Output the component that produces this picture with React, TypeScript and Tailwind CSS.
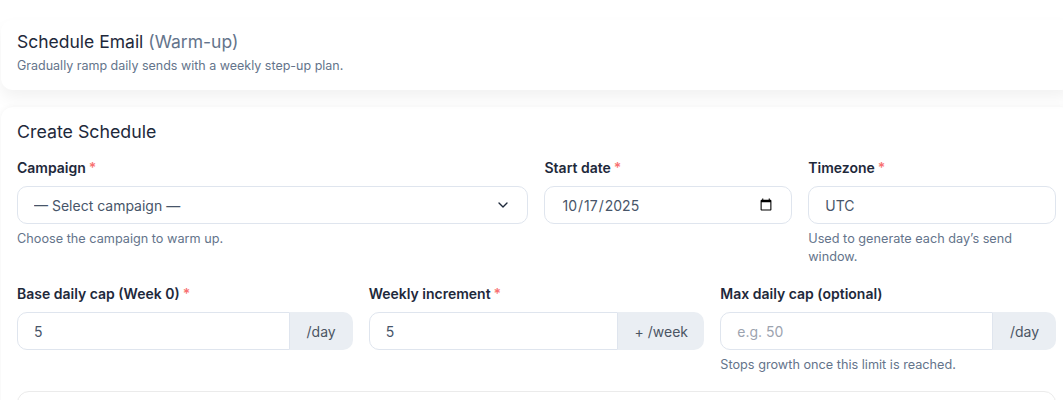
import { ChevronDown } from "lucide-react";

function Label({ text, required }: { text: string; required?: boolean }) {
  return (
    <label className="block text-[14px] leading-5 font-semibold text-[#1e293b] mb-2">
      {text}
      {required && <span className="text-[#f87171] ml-[3px]">*</span>}
    </label>
  );
}

function AddonInput({ value, placeholder, addon, addonW }: { value?: string; placeholder?: string; addon: string; addonW: string }) {
  return (
    <div className="flex h-[38px]">
      <input
        defaultValue={value}
        placeholder={placeholder}
        className="flex-1 min-w-0 rounded-l-[10px] border border-[#dfe5ee] bg-white px-4 text-[14px] text-[#475569] placeholder:text-[#9ca3af] outline-none"
      />
      <span className={`${addonW} flex items-center justify-center rounded-r-[10px] bg-[#eaeef3] text-[14px] text-[#4b5563]`}>{addon}</span>
    </div>
  );
}

export default function App() {
  return (
    <div className="w-[1063px] h-[400px] overflow-hidden bg-white font-['Inter',sans-serif] text-[#1e293b]">
      <div className="w-[1072px] pt-5 pl-[1px]">
        <div className="relative z-10 rounded-xl bg-white px-4 pt-[11px] pb-4 shadow-[0_8px_16px_rgba(0,0,0,0.055)]">
          <h1 className="text-[17.5px] leading-[22px] text-[#1e293b]">
            Schedule Email <span className="text-[#64748b]">(Warm-up)</span>
          </h1>
          <p className="mt-[5px] text-[12.5px] leading-4 text-[#64748b]">Gradually ramp daily sends with a weekly step-up plan.</p>
        </div>

        <div className="mt-[17px] rounded-xl bg-white px-4 pt-[14px] shadow-[0_0_6px_rgba(0,0,0,0.05)]">
          <h2 className="text-[17.8px] leading-[22px] text-[#1e293b] mb-[15px]">Create Schedule</h2>

          <div className="grid grid-cols-12 gap-x-4 gap-y-[18px]">
            <div className="col-span-6">
              <Label text="Campaign" required />
              <div className="relative h-[38px]">
                <select className="h-full w-full appearance-none rounded-[10px] border border-[#dfe5ee] bg-white px-4 text-[14px] text-[#475569] outline-none">
                  <option>— Select campaign —</option>
                </select>
                <ChevronDown className="pointer-events-none absolute right-[17px] top-[11px] h-4 w-4 text-[#1e293b]" strokeWidth={2} />
              </div>
              <p className="mt-[6px] text-[12.7px] leading-[18px] text-[#64748b]">Choose the campaign to warm up.</p>
            </div>

            <div className="col-span-3">
              <Label text="Start date" required />
              <input
                type="date"
                defaultValue="2025-10-17"
                className="h-[38px] w-full rounded-[10px] border border-[#dfe5ee] bg-white px-4 text-[14px] text-[#475569] outline-none"
              />
            </div>

            <div className="col-span-3">
              <Label text="Timezone" required />
              <input
                defaultValue="UTC"
                className="h-[38px] w-full rounded-[10px] border border-[#dfe5ee] bg-white px-4 text-[14px] text-[#475569] outline-none"
              />
              <p className="mt-[6px] w-[225px] text-[12.7px] leading-[18px] text-[#64748b]">Used to generate each day’s send window.</p>
            </div>

            <div className="col-span-4">
              <Label text="Base daily cap (Week 0)" required />
              <AddonInput value="5" addon="/day" addonW="w-[63px]" />
            </div>

            <div className="col-span-4">
              <Label text="Weekly increment" required />
              <AddonInput value="5" addon="+ /week" addonW="w-[86px]" />
            </div>

            <div className="col-span-4">
              <Label text="Max daily cap (optional)" />
              <AddonInput placeholder="e.g. 50" addon="/day" addonW="w-[63px]" />
              <p className="mt-[6px] text-[12.7px] leading-[18px] text-[#64748b]">Stops growth once this limit is reached.</p>
            </div>
          </div>

          <div className="mt-[17px] h-[40px] rounded-xl border border-[#ebebeb] bg-white"></div>
        </div>
      </div>
    </div>
  );
}
